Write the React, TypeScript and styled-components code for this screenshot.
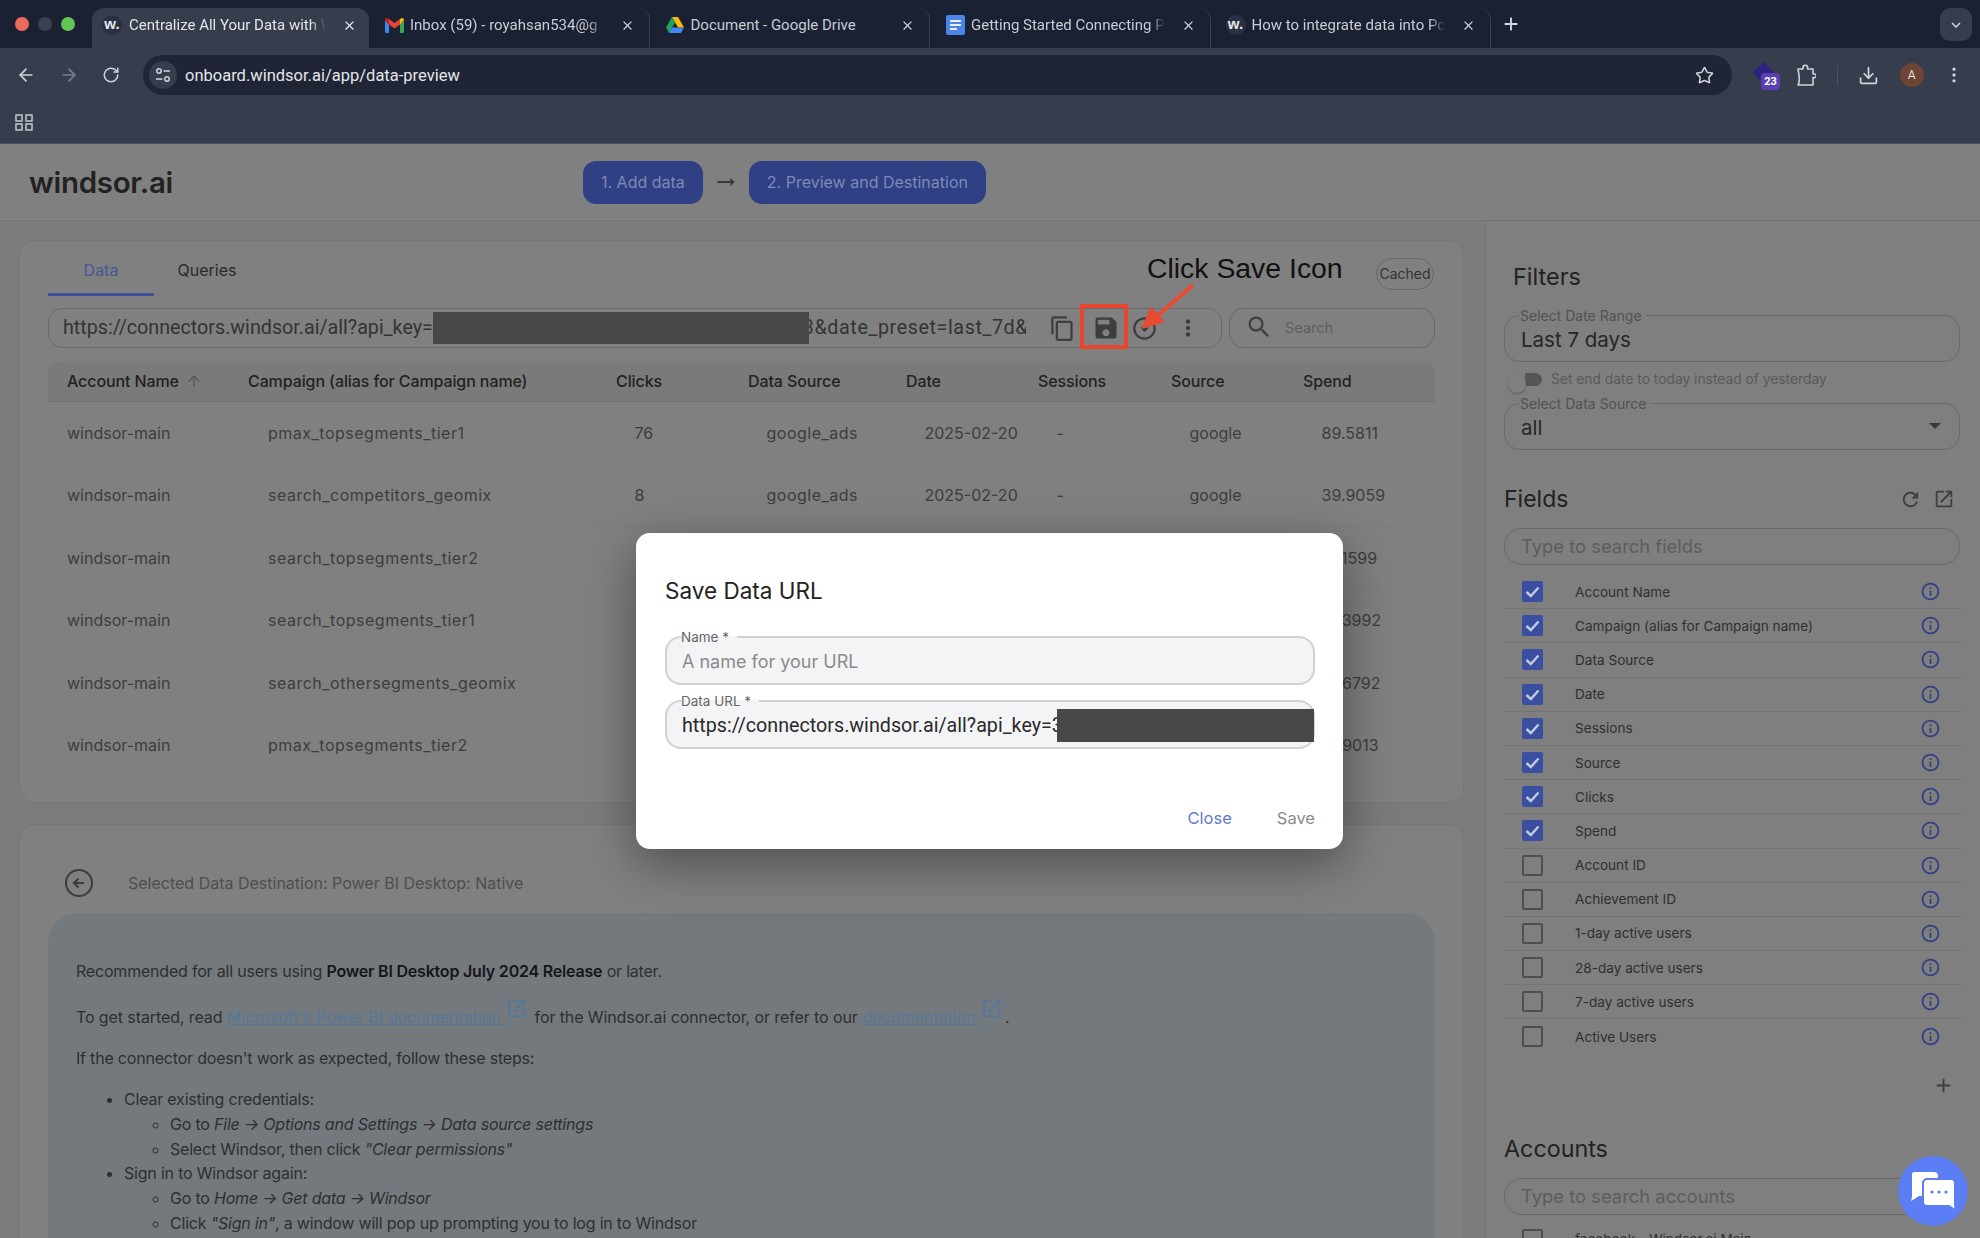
import styled, { createGlobalStyle } from "styled-components";
import {
  MdAdd,
  MdArrowRightAlt,
  MdArrowUpward,
  MdClose,
  MdInfoOutline,
  MdKeyboardArrowDown,
  MdMoreVert,
  MdOpenInNew,
  MdOutlineArrowDropDownCircle,
  MdOutlineContentCopy,
  MdRefresh,
  MdSave,
  MdSearch,
} from "react-icons/md";
import { LuArrowLeft, LuArrowRight, LuDownload, LuEllipsisVertical, LuRotateCw, LuStar } from "react-icons/lu";

const BRAND = "#2f4084";
const UI_FONT = `Inter, "Noto Sans", sans-serif`;
const SYS_FONT = `Roboto, "Liberation Sans", sans-serif`;

const tabs = [
  { title: "Centralize All Your Data with W", icon: "w", active: true },
  { title: "Inbox (59) - royahsan534@g", icon: "gmail" },
  { title: "Document - Google Drive", icon: "drive", plain: true },
  { title: "Getting Started Connecting P", icon: "docs" },
  { title: "How to integrate data into Po", icon: "w" },
];

const columns = ["Campaign (alias for Campaign name)", "Clicks", "Data Source", "Date", "Sessions", "Source", "Spend"];

const rows = [
  ["windsor-main", "pmax_topsegments_tier1", "76", "google_ads", "2025-02-20", "-", "google", "89.5811"],
  ["windsor-main", "search_competitors_geomix", "8", "google_ads", "2025-02-20", "-", "google", "39.9059"],
  ["windsor-main", "search_topsegments_tier2", "", "google_ads", "2025-02-20", "-", "google", "21.1599"],
  ["windsor-main", "search_topsegments_tier1", "", "google_ads", "2025-02-20", "-", "google", "18.3992"],
  ["windsor-main", "search_othersegments_geomix", "", "google_ads", "2025-02-20", "-", "google", "12.6792"],
  ["windsor-main", "pmax_topsegments_tier2", "", "google_ads", "2025-02-20", "-", "google", "10.9013"],
];

const fields = [
  ["Account Name", true],
  ["Campaign (alias for Campaign name)", true],
  ["Data Source", true],
  ["Date", true],
  ["Sessions", true],
  ["Source", true],
  ["Clicks", true],
  ["Spend", true],
  ["Account ID", false],
  ["Achievement ID", false],
  ["1-day active users", false],
  ["28-day active users", false],
  ["7-day active users", false],
  ["Active Users", false],
] as const;

const TabIcon = ({ kind }: { kind: string }) => {
  if (kind === "gmail") {
    return (
      <svg width="19" height="15" viewBox="0 0 19 15">
        <path d="M0 2v11.5c0 .8.6 1.5 1.4 1.5H4V6.5z" fill="#4285f4" />
        <path d="M15 6.500V15h2.600c.8 0 1.400-.7 1.400-1.500V2z" fill="#34a853" />
        <path d="M4 6.500 9.500 10.500 15 6.500V1L9.500 5 4 1z" fill="#ea4335" />
        <path d="M0 2 4 6.500V1L2.600.2C1.400-.4 0 .6 0 2z" fill="#c5221f" />
        <path d="M19 2 15 6.500V1l1.400-.8C17.600-.4 19 .6 19 2z" fill="#fbbc04" />
      </svg>
    );
  }
  if (kind === "drive") {
    return (
      <svg width="18" height="16" viewBox="0 0 18 16">
        <path d="M6 0h6l6 10.500h-6z" fill="#fbbc04" />
        <path d="M6 0 0 10.500 3 16l6-10.500z" fill="#1ea362" />
        <path d="M6 10.500h12L15 16H3z" fill="#4285f4" />
      </svg>
    );
  }
  if (kind === "docs") {
    return (
      <svg width="19" height="20" viewBox="0 0 19 20">
        <rect width="19" height="20" rx="2" fill="#4a86e8" />
        <path d="M4 6h11M4 10h11M4 14h7" stroke="#e8eefb" strokeWidth="2" />
      </svg>
    );
  }
  return <WFavicon>w.</WFavicon>;
};

const TuneIcon = () => (
  <svg width="18" height="18" viewBox="0 0 18 18" fill="none" stroke="#cfd2d8" strokeWidth="1.500">
    <circle cx="5" cy="5" r="2.200" />
    <path d="M9.500 5H16M2 13h6.500" />
    <circle cx="13" cy="13" r="2.200" />
  </svg>
);

const AppsIcon = () => (
  <svg width="18" height="17" viewBox="0 0 18 17" fill="none" stroke="#c3c7cf" strokeWidth="1.500">
    <rect x="1" y="1" width="6" height="6" />
    <rect x="11" y="1" width="6" height="6" />
    <rect x="1" y="10" width="6" height="6" />
    <rect x="11" y="10" width="6" height="6" />
  </svg>
);

const PuzzleIcon = () => (
  <svg width="20" height="24" viewBox="0 0 20 24" fill="none" stroke="#cfd2d8" strokeWidth="1.600" strokeLinejoin="round">
    <path d="M2 6h5V4.500a2.300 2.300 0 0 1 4.600 0V6H17v5h1.500a1.800 1.800 0 0 1 0 3.600H17V22H2c1.300-2 1.300-3.800 1.300-5.500S3 11 2 6z" />
  </svg>
);

const BackCircle = () => (
  <svg width="30" height="30" viewBox="0 0 30 30" fill="none" stroke="#3d3d3d" strokeWidth="2">
    <circle cx="15" cy="15" r="13" />
    <path d="M20 15h-9M14.500 10.500 10 15l4.500 4.500" strokeWidth="2.200" />
  </svg>
);

const CheckMark = () => (
  <svg width="21" height="21" viewBox="0 0 21 21" fill="none" stroke="#c3c9de" strokeWidth="2.400">
    <path d="M4.500 11 8.800 15 16.500 6.500" />
  </svg>
);

const ChatIcon = () => (
  <svg width="44" height="40" viewBox="0 0 44 40">
    <path d="M4 0h20a4 4 0 0 1 4 4v16a4 4 0 0 1-4 4H9l-8 5c.4-2 1-3 1-5V2c0-1 1-2 2-2z" fill="#fff" transform="translate(-1 0)" />
    <path
      d="M16 7h24a4 4 0 0 1 4 4v21c0 3 .5 5 1 7l-7-5H16a4 4 0 0 1-4-4V11a4 4 0 0 1 4-4z"
      fill="#fff"
      stroke="#5b7ef5"
      strokeWidth="2"
    />
    <circle cx="21" cy="20" r="1.600" fill="#5b7ef5" />
    <circle cx="28" cy="20" r="1.600" fill="#5b7ef5" />
    <circle cx="35" cy="20" r="1.600" fill="#5b7ef5" />
  </svg>
);

const App = () => {
  return (
    <>
      <GlobalStyle />
      <Screen>
        <TabStrip>
          <TrafficLights>
            <Light color="#ed6a5e" />
            <Light color="#3b4254" />
            <Light color="#61c554" />
          </TrafficLights>
          {tabs.map((tab) => (
            <Tab key={tab.title} $active={tab.active}>
              <TabIconSlot $active={tab.active}>
                <TabIcon kind={tab.icon} />
              </TabIconSlot>
              <TabTitle $plain={tab.plain}>{tab.title}</TabTitle>
              <MdClose size={15} />
            </Tab>
          ))}
          <NewTab>
            <MdAdd size={22} />
          </NewTab>
          <TabSearch>
            <MdKeyboardArrowDown size={18} />
          </TabSearch>
        </TabStrip>
        <Toolbar>
          <NavIcons>
            <LuArrowLeft size={20} />
            <Faded>
              <LuArrowRight size={20} />
            </Faded>
            <LuRotateCw size={18} />
          </NavIcons>
          <AddressBar>
            <SiteBadge>
              <TuneIcon />
            </SiteBadge>
            <AddressText>onboard.windsor.ai/app/data-preview</AddressText>
            <LuStar size={19} />
          </AddressBar>
          <Extensions>
            <ExtensionStack>
              <ExtensionMark />
              <ExtensionBadge>23</ExtensionBadge>
            </ExtensionStack>
            <PuzzleIcon />
            <ToolDivider />
            <LuDownload size={21} />
            <Avatar>A</Avatar>
            <LuEllipsisVertical size={20} />
          </Extensions>
        </Toolbar>
        <BookmarksBar>
          <AppsIcon />
        </BookmarksBar>

        <Page>
          <AppHeader>
            <Logo>windsor.ai</Logo>
            <Steps>
              <StepButton>1. Add data</StepButton>
              <MdArrowRightAlt size={26} color="#3a3a3a" />
              <StepButton>2. Preview and Destination</StepButton>
            </Steps>
          </AppHeader>

          <Body>
            <Content>
              <DataCard>
                <TabsRow>
                  <DataTab $active>Data</DataTab>
                  <DataTab>Queries</DataTab>
                  <CachedPill>Cached</CachedPill>
                </TabsRow>
                <UrlRow>
                  <UrlField>
                    <UrlText>
                      https://connectors.windsor.ai/all?api_key=
                      <Redaction />
                      <UrlTail>3&amp;date_preset=last_7d&amp;</UrlTail>
                    </UrlText>
                    <UrlIcon $offset={4}>
                      <MdOutlineContentCopy size={27} />
                    </UrlIcon>
                    <UrlIcon>
                      <MdSave size={28} />
                    </UrlIcon>
                    <UrlIcon $offset={-4}>
                      <MdOutlineArrowDropDownCircle size={27} />
                    </UrlIcon>
                    <UrlIcon>
                      <MdMoreVert size={26} />
                    </UrlIcon>
                  </UrlField>
                  <TableSearch>
                    <MdSearch size={28} />
                    <span>Search</span>
                  </TableSearch>
                </UrlRow>
                <TableHead>
                  <HeadCell>
                    Account Name
                    <MdArrowUpward size={18} color="#5a5a5a" />
                  </HeadCell>
                  {columns.map((column) => (
                    <HeadCell key={column}>{column}</HeadCell>
                  ))}
                </TableHead>
                {rows.map((row) => (
                  <TableRow key={row[1]}>
                    {row.map((value, index) => (
                      <BodyCell key={index} $first={index === 0} $indent={index === 1} $wide={index === 1 || index === 3}>
                        {value}
                      </BodyCell>
                    ))}
                  </TableRow>
                ))}
              </DataCard>

              <GuideCard>
                <GuideHeader>
                  <BackCircle />
                  <span>Selected Data Destination: Power BI Desktop: Native</span>
                </GuideHeader>
                <GuidePanel>
                  <GuideText>
                    Recommended for all users using <strong>Power BI Desktop July 2024 Release</strong> or later.
                  </GuideText>
                  <LinkLine>
                    To get started, read <GuideLink>Microsoft's Power BI documentation </GuideLink>
                    <LinkIcon>
                      <MdOpenInNew size={23} />
                    </LinkIcon>{" "}
                    for the Windsor.ai connector, or refer to our <GuideLink>documentation </GuideLink>
                    <LinkIcon>
                      <MdOpenInNew size={23} />
                    </LinkIcon>
                    .
                  </LinkLine>
                  <GuideText>If the connector doesn't work as expected, follow these steps:</GuideText>
                  <Steplist>
                    <li>
                      Clear existing credentials:
                      <ul>
                        <li>
                          Go to <em>File → Options and Settings → Data source settings</em>
                        </li>
                        <li>
                          Select Windsor, then click <em>"Clear permissions"</em>
                        </li>
                      </ul>
                    </li>
                    <li>
                      Sign in to Windsor again:
                      <ul>
                        <li>
                          Go to <em>Home → Get data → Windsor</em>
                        </li>
                        <li>
                          Click <em>"Sign in"</em>, a window will pop up prompting you to log in to Windsor
                        </li>
                      </ul>
                    </li>
                  </Steplist>
                </GuidePanel>
              </GuideCard>
            </Content>

            <Sidebar>
              <FiltersTitle>Filters</FiltersTitle>
              <OutlinedField>
                <legend>Select Date Range</legend>
                <FieldValue>Last 7 days</FieldValue>
              </OutlinedField>
              <ToggleRow>
                <Toggle />
                <span>Set end date to today instead of yesterday</span>
              </ToggleRow>
              <OutlinedField>
                <legend>Select Data Source</legend>
                <FieldValue>all</FieldValue>
                <SelectCaret />
              </OutlinedField>

              <FieldsHeader>
                <SectionTitle>Fields</SectionTitle>
                <MdRefresh size={23} color="#3f3f3f" />
                <MdOpenInNew size={22} color="#3f3f3f" />
              </FieldsHeader>
              <SearchBar>Type to search fields</SearchBar>
              <FieldList>
                {fields.map(([name, checked]) => (
                  <FieldRow key={name}>
                    <Checkbox $checked={checked}>{checked && <CheckMark />}</Checkbox>
                    <FieldName>{name}</FieldName>
                    <MdInfoOutline size={21} color={BRAND} />
                  </FieldRow>
                ))}
              </FieldList>
              <AddRow>
                <MdAdd size={23} color="#3f3f3f" />
              </AddRow>
              <AccountsTitle>Accounts</AccountsTitle>
              <SearchBar>Type to search accounts</SearchBar>
              <AccountRow>
                <Checkbox />
                <FieldName>facebook - Windsor.ai Main</FieldName>
              </AccountRow>
            </Sidebar>
          </Body>

          <Modal>
            <ModalTitle>Save Data URL</ModalTitle>
            <ModalField>
              <legend>Name *</legend>
              <ModalPlaceholder>A name for your URL</ModalPlaceholder>
            </ModalField>
            <ModalField>
              <legend>Data URL *</legend>
              <ModalValue>
                https://connectors.windsor.ai/all?api_key=3
                <ModalRedaction />
              </ModalValue>
            </ModalField>
            <ModalActions>
              <ModalAction $primary>Close</ModalAction>
              <ModalAction>Save</ModalAction>
            </ModalActions>
          </Modal>

          <CalloutText>Click Save Icon</CalloutText>
          <CalloutBox />
          <CalloutArrow width="60" height="52" viewBox="0 0 60 52">
            <path d="M55 2 18 34" stroke="#ea4a2f" strokeWidth="4" />
            <path d="M3 46 13 24 27 39z" fill="#ea4a2f" />
          </CalloutArrow>

          <ChatBubble>
            <ChatIcon />
          </ChatBubble>
        </Page>
      </Screen>
    </>
  );
};

export default App;

const GlobalStyle = createGlobalStyle`
  html, body {
    margin: 0;
    padding: 0;
    background: #7b7b7b;
  }
  * {
    box-sizing: border-box;
  }
`;
const Screen = styled.div`
  width: 1980px;
  height: 1238px;
  overflow: hidden;
  font-family: ${UI_FONT};
  display: flex;
  flex-direction: column;
`;
const TabStrip = styled.div`
  height: 48px;
  background: #1a2133;
  display: flex;
  align-items: flex-end;
  position: relative;
  color: #d5d8de;
`;
const TrafficLights = styled.div`
  width: 92px;
  height: 48px;
  padding: 0 0 0 15px;
  display: flex;
  align-items: center;
  gap: 9px;
`;
const Light = styled.div<{ color: string }>`
  width: 14px;
  height: 14px;
  border-radius: 50%;
  background: ${(p) => p.color};
`;
const Tab = styled.div<{ $active?: boolean }>`
  height: 40px;
  width: ${(p) => (p.$active ? "277px" : "280.500px")};
  padding: 0 ${(p) => (p.$active ? "12px" : "14px")} 6px ${(p) => (p.$active ? "6px" : "11px")};
  display: flex;
  align-items: center;
  border-radius: 12px 12px 0 0;
  background: ${(p) => (p.$active ? "#363d4d" : "transparent")};
  color: ${(p) => (p.$active ? "#e3e5e9" : "#c9ccd3")};
  border-right: ${(p) => (p.$active ? "none" : "1px solid #3a4152")};
  font-family: ${SYS_FONT};
  font-size: 15px;
`;
const TabIconSlot = styled.div<{ $active?: boolean }>`
  width: 28px;
  margin-right: ${(p) => (p.$active ? "3px" : "2px")};
  display: flex;
  justify-content: center;
`;
const TabTitle = styled.div<{ $plain?: boolean }>`
  flex: 1;
  white-space: nowrap;
  overflow: hidden;
  margin-right: 12px;
  -webkit-mask-image: ${(p) => (p.$plain ? "none" : "linear-gradient(90deg, #000 90%, transparent 98%)")};
`;
const WFavicon = styled.div`
  width: 20px;
  height: 20px;
  border-radius: 50%;
  background: #2a3142;
  color: #e8e8e8;
  font-family: "Liberation Sans", sans-serif;
  font-size: 15px;
  font-weight: 700;
  line-height: 18px;
  text-align: center;
`;
const NewTab = styled.div`
  margin-left: 9px;
  height: 40px;
  display: flex;
  padding-bottom: 8px;
  align-items: center;
`;
const TabSearch = styled.div`
  position: absolute;
  top: 8px;
  right: 8px;
  width: 32px;
  height: 33px;
  border-radius: 10px;
  background: #363d4d;
  display: flex;
  align-items: center;
  justify-content: center;
`;
const Toolbar = styled.div`
  height: 47px;
  background: #363d4d;
  display: flex;
  align-items: flex-end;
  color: #cfd2d8;
`;
const NavIcons = styled.div`
  width: 143px;
  height: 40px;
  padding: 0 23px 0 16px;
  display: flex;
  align-items: center;
  justify-content: space-between;
`;
const Faded = styled.div`
  display: flex;
  color: #7a8090;
`;
const AddressBar = styled.div`
  width: 1589px;
  height: 40px;
  border-radius: 20px;
  background: #1f2535;
  display: flex;
  align-items: center;
  padding: 0 18px 0 6px;
`;
const SiteBadge = styled.div`
  width: 28px;
  height: 28px;
  border-radius: 50%;
  background: #363d4d;
  display: flex;
  align-items: center;
  justify-content: center;
`;
const AddressText = styled.div`
  flex: 1;
  margin-left: 8px;
  color: #e3e5e9;
  font-family: ${SYS_FONT};
  font-size: 16.500px;
`;
const Extensions = styled.div`
  flex: 1;
  height: 40px;
  padding: 0 16px 0 20px;
  display: flex;
  align-items: center;
  justify-content: space-between;
`;
const ExtensionStack = styled.div`
  position: relative;
  width: 24px;
  height: 28px;
`;
const ExtensionMark = styled.div`
  width: 15px;
  height: 15px;
  margin: 4px 0 0 4px;
  transform: rotate(45deg);
  background: #2f2180;
`;
const ExtensionBadge = styled.div`
  position: absolute;
  top: 12px;
  left: 9px;
  width: 19px;
  height: 17px;
  border-radius: 4px;
  background: #5a3fb5;
  color: #fff;
  font-family: ${SYS_FONT};
  font-size: 11px;
  font-weight: 700;
  line-height: 17px;
  text-align: center;
`;
const ToolDivider = styled.div`
  width: 1px;
  height: 20px;
  background: #4a5162;
`;
const Avatar = styled.div`
  width: 24px;
  height: 24px;
  border-radius: 50%;
  background: #6e4434;
  color: #e6dcd8;
  font-family: ${SYS_FONT};
  font-size: 12px;
  line-height: 24px;
  text-align: center;
`;
const BookmarksBar = styled.div`
  height: 49px;
  padding: 7px 0 0 15px;
  background: #363d4d;
  border-bottom: 1px solid #4b5060;
  display: flex;
  align-items: center;
`;
const Page = styled.div`
  position: relative;
  flex: 1;
  min-height: 0;
  background: #7b7b7b;
  overflow: hidden;
`;
const AppHeader = styled.div`
  height: 77px;
  background: #808080;
  border-bottom: 1px solid #747474;
  display: flex;
  align-items: center;
  padding: 0 0 0 29px;
`;
const Logo = styled.div`
  width: 554px;
  color: #222;
  font-size: 29.500px;
  font-weight: 600;
  letter-spacing: -0.300px;
`;
const Steps = styled.div`
  display: flex;
  align-items: center;
  gap: 10px;
`;
const StepButton = styled.div`
  height: 43px;
  padding: 0 18px;
  border-radius: 13px;
  background: ${BRAND};
  color: #7f89b7;
  font-size: 16px;
  line-height: 43px;
`;
const Body = styled.div`
  display: grid;
  grid-template-columns: 1485px 495px;
`;
const Content = styled.div`
  padding: 19px 21px 0 19px;
  display: flex;
  flex-direction: column;
  gap: 21px;
`;
const DataCard = styled.div`
  height: 563px;
  padding: 0 28px;
  border-radius: 16px;
  background: #808080;
  border: 1px solid #787878;
`;
const TabsRow = styled.div`
  height: 55px;
  display: flex;
  position: relative;
`;
const DataTab = styled.div<{ $active?: boolean }>`
  width: 106px;
  height: 55px;
  padding-top: 19px;
  text-align: center;
  font-size: 16px;
  color: ${(p) => (p.$active ? "#465796" : "#2a2a2a")};
  border-bottom: 3px solid ${(p) => (p.$active ? "#3f5199" : "transparent")};
`;
const CachedPill = styled.div`
  position: absolute;
  top: 17px;
  right: 1px;
  width: 58px;
  height: 32px;
  border-radius: 16px;
  border: 1.500px solid #686868;
  color: #333;
  font-size: 14px;
  line-height: 29px;
  text-align: center;
`;
const UrlRow = styled.div`
  margin-top: 12px;
  display: flex;
  gap: 7px;
`;
const UrlField = styled.div`
  width: 1174px;
  height: 40px;
  border: 1.500px solid #696969;
  border-radius: 14px;
  padding: 0 12px 0 14px;
  display: flex;
  align-items: center;
  color: #3d3d3d;
`;
const UrlText = styled.div`
  flex: 0 0 963px;
  margin: -1px 11px 0 0;
  overflow: hidden;
  white-space: nowrap;
  font-family: ${SYS_FONT};
  font-size: 19.700px;
  color: #333;
  line-height: 36px;
`;
const UrlTail = styled.span`
  letter-spacing: 0.600px;
`;
const Redaction = styled.span`
  display: inline-block;
  width: 376px;
  height: 32px;
  margin-right: -6px;
  position: relative;
  vertical-align: middle;
  background: #484848;
`;
const UrlIcon = styled.div<{ $offset?: number }>`
  flex: 0 0 43px;
  margin-left: ${(p) => p.$offset ?? 0}px;
  display: flex;
  justify-content: center;
`;
const TableSearch = styled.div`
  width: 206px;
  height: 40px;
  border: 1.500px solid #696969;
  border-radius: 14px;
  padding: 0 0 2px 15px;
  display: flex;
  align-items: center;
  gap: 12px;
  color: #3f3f3f;
  span {
    color: #5f5f5f;
    font-size: 14.500px;
  }
`;
const gridColumns = "181px 368px 132px 158px 132px 133px 132px 1fr";
const TableHead = styled.div`
  margin-top: 13px;
  height: 41px;
  padding-left: 19px;
  border-radius: 12px 12px 0 0;
  background: #7a7a7a;
  border-bottom: 1px solid #727272;
  display: grid;
  grid-template-columns: ${gridColumns};
  align-items: center;
`;
const HeadCell = styled.div`
  display: flex;
  align-items: center;
  gap: 6px;
  color: #222;
  font-size: 16px;
  font-weight: 500;
  letter-spacing: -0.100px;
  white-space: nowrap;
`;
const TableRow = styled.div`
  height: 62.500px;
  padding-left: 19px;
  border-bottom: 1px solid #7c7c7c;
  display: grid;
  grid-template-columns: ${gridColumns};
  align-items: center;
`;
const BodyCell = styled.div<{ $first?: boolean; $indent?: boolean; $wide?: boolean }>`
  padding-left: ${(p) => (p.$first ? "0" : p.$indent ? "20px" : "18.500px")};
  color: #3d3d3d;
  font-size: 16px;
  letter-spacing: ${(p) => (p.$wide ? "0.500px" : "0")};
  white-space: nowrap;
`;
const GuideCard = styled.div`
  height: 500px;
  padding: 0 28px;
  border-radius: 16px;
  background: #808080;
  border: 1px solid #787878;
`;
const GuideHeader = styled.div`
  height: 88px;
  padding: 43px 0 0 16px;
  display: flex;
  align-items: flex-start;
  gap: 34px;
  color: #4e4e4e;
  font-size: 16px;
  span {
    line-height: 30px;
  }
`;
const GuidePanel = styled.div`
  padding: 46px 28px 0;
  border-radius: 30px;
  background: #74797d;
  color: #2c2f31;
  font-size: 16px;
  min-height: 400px;
  letter-spacing: -0.200px;
`;
const GuideText = styled.p`
  margin: 0 0 17px;
  line-height: 24px;
  strong {
    color: #141618;
    font-weight: 600;
  }
`;
const LinkLine = styled(GuideText)`
  margin-top: 22px;
  letter-spacing: -0.100px;
`;
const GuideLink = styled.span`
  color: #55789a;
  text-decoration: underline;
  letter-spacing: 0;
`;
const LinkIcon = styled.span`
  color: #55789a;
  display: inline-block;
  vertical-align: 3px;
  margin: -10px 2px -4px 0;
  line-height: 0;
`;
const Steplist = styled.ul`
  margin: 0;
  padding-left: 48px;
  line-height: 24.800px;
  ul {
    margin: 0;
    padding-left: 46px;
    list-style: circle;
  }
`;
const Sidebar = styled.div`
  padding: 0 20px 0 18px;
  border-left: 1px solid #757575;
  background: #7f7f7f;
  height: 1017px;
  overflow: hidden;
  font-size: 15px;
`;
const FiltersTitle = styled.div`
  margin: 39px 0 14px 9px;
  height: 34px;
  line-height: 34px;
  color: #222;
  font-size: 23.500px;
`;
const OutlinedField = styled.fieldset`
  position: relative;
  margin: 0;
  min-width: 0;
  height: 54px;
  padding: 0 16px;
  border: 1.500px solid #6a6a6a;
  border-radius: 16px;
  legend {
    margin: 0 0 -1px -1px;
    padding: 0 4px 0 0;
    color: #525252;
    font-size: 14px;
    line-height: 15px;
  }
`;
const FieldValue = styled.div`
  color: #262626;
  font-size: 20.500px;
  line-height: 28px;
  margin-top: 4px;
`;
const SelectCaret = styled.div`
  position: absolute;
  right: 18px;
  top: 13px;
  border-top: 6px solid #3a3a3a;
  border-left: 6px solid transparent;
  border-right: 6px solid transparent;
`;
const ToggleRow = styled.div`
  height: 34px;
  display: flex;
  align-items: center;
  gap: 9px;
  padding-left: 21px;
  color: #5a5a5a;
  font-size: 13.800px;
`;
const Toggle = styled.div`
  position: relative;
  width: 17px;
  height: 13px;
  border-radius: 0 7px 7px 0;
  background: #555;
  &::after {
    content: "";
    position: absolute;
    left: -17px;
    top: 2px;
    width: 18px;
    height: 18px;
    border-radius: 50%;
    background: #808080;
    box-shadow: 0 1px 2px rgba(0, 0, 0, 0.3);
  }
`;
const FieldsHeader = styled.div`
  margin-top: 32px;
  height: 34px;
  padding-right: 5px;
  display: flex;
  align-items: center;
  gap: 11px;
`;
const SectionTitle = styled.div`
  flex: 1;
  color: #222;
  font-size: 23px;
`;
const SearchBar = styled.div`
  height: 37px;
  margin-top: 12px;
  padding-left: 16px;
  border: 1.500px solid #6a6a6a;
  border-radius: 18px;
  color: #5d5d5d;
  font-size: 18.400px;
  line-height: 34px;
`;
const FieldList = styled.div`
  margin-top: 10px;
  width: 458px;
`;
const FieldRow = styled.div`
  height: 34.200px;
  padding: 0 21px 0 18px;
  display: flex;
  align-items: center;
  border-bottom: 1px solid #747474;
  &:last-child {
    border-bottom: none;
  }
`;
const Checkbox = styled.div<{ $checked?: boolean }>`
  width: 21px;
  height: 21px;
  border-radius: 2px;
  background: ${(p) => (p.$checked ? "#3a4f9f" : "transparent")};
  border: ${(p) => (p.$checked ? "none" : "2px solid #4f4f4f")};
  flex: none;
`;
const FieldName = styled.div`
  flex: 1;
  margin-left: 32px;
  color: #2f2f2f;
  font-size: 13.600px;
  white-space: nowrap;
`;
const AddRow = styled.div`
  height: 32px;
  margin-top: 16px;
  padding-right: 5px;
  display: flex;
  justify-content: flex-end;
  align-items: center;
`;
const AccountsTitle = styled.div`
  margin-top: 30px;
  height: 34px;
  line-height: 34px;
  color: #222;
  font-size: 23.300px;
`;
const AccountRow = styled.div`
  margin-top: 14px;
  padding-left: 18px;
  display: flex;
  align-items: center;
`;
const Modal = styled.div`
  position: absolute;
  left: 636px;
  top: 389px;
  width: 707px;
  height: 316px;
  padding: 0 28px 0 29px;
  border-radius: 14px;
  background: #fff;
  box-shadow: 0 14px 50px rgba(0, 0, 0, 0.4);
`;
const ModalTitle = styled.div`
  padding-top: 41px;
  height: 97px;
  color: #222;
  font-size: 22.500px;
  line-height: 34px;
`;
const ModalField = styled.fieldset`
  margin: 0 0 9px;
  min-width: 0;
  height: 55px;
  padding: 0 14px 0 15px;
  border: 2px solid #cfd1d3;
  border-radius: 16px;
  background: #f3f4f6;
  legend {
    margin-left: -1px;
    padding: 0 8px 0 0;
    color: #666;
    font-size: 13.500px;
    line-height: 14px;
    height: 14px;
  }
`;
const ModalPlaceholder = styled.div`
  color: #8b8b8b;
  font-size: 18px;
  line-height: 36px;
`;
const ModalValue = styled.div`
  font-family: ${SYS_FONT};
  color: #2a2a2a;
  font-size: 19.700px;
  line-height: 36px;
  white-space: nowrap;
`;
const ModalRedaction = styled.span`
  display: inline-block;
  width: 257px;
  height: 33px;
  margin-left: -6px;
  vertical-align: middle;
  background: #484848;
  position: relative;
  top: -1px;
`;
const ModalActions = styled.div`
  position: absolute;
  right: 28px;
  bottom: 21px;
  display: flex;
  gap: 45px;
`;
const ModalAction = styled.div<{ $primary?: boolean }>`
  color: ${(p) => (p.$primary ? "#5f7dc9" : "#8a8a8a")};
  font-size: 16.500px;
`;
const CalloutText = styled.div`
  position: absolute;
  left: 1147px;
  top: 106px;
  color: #111;
  font-family: "Liberation Sans", sans-serif;
  font-size: 28.400px;
  line-height: 36px;
`;
const CalloutBox = styled.div`
  position: absolute;
  left: 1080px;
  top: 160px;
  width: 48px;
  height: 45px;
  border: 4px solid #e8452c;
`;
const CalloutArrow = styled.svg`
  position: absolute;
  left: 1138px;
  top: 139px;
`;
const ChatBubble = styled.div`
  position: absolute;
  left: 1898px;
  top: 1012px;
  width: 70px;
  height: 70px;
  border-radius: 50%;
  background: #5b7ef5;
  display: flex;
  align-items: center;
  justify-content: center;
  padding-top: 2px;
`;
